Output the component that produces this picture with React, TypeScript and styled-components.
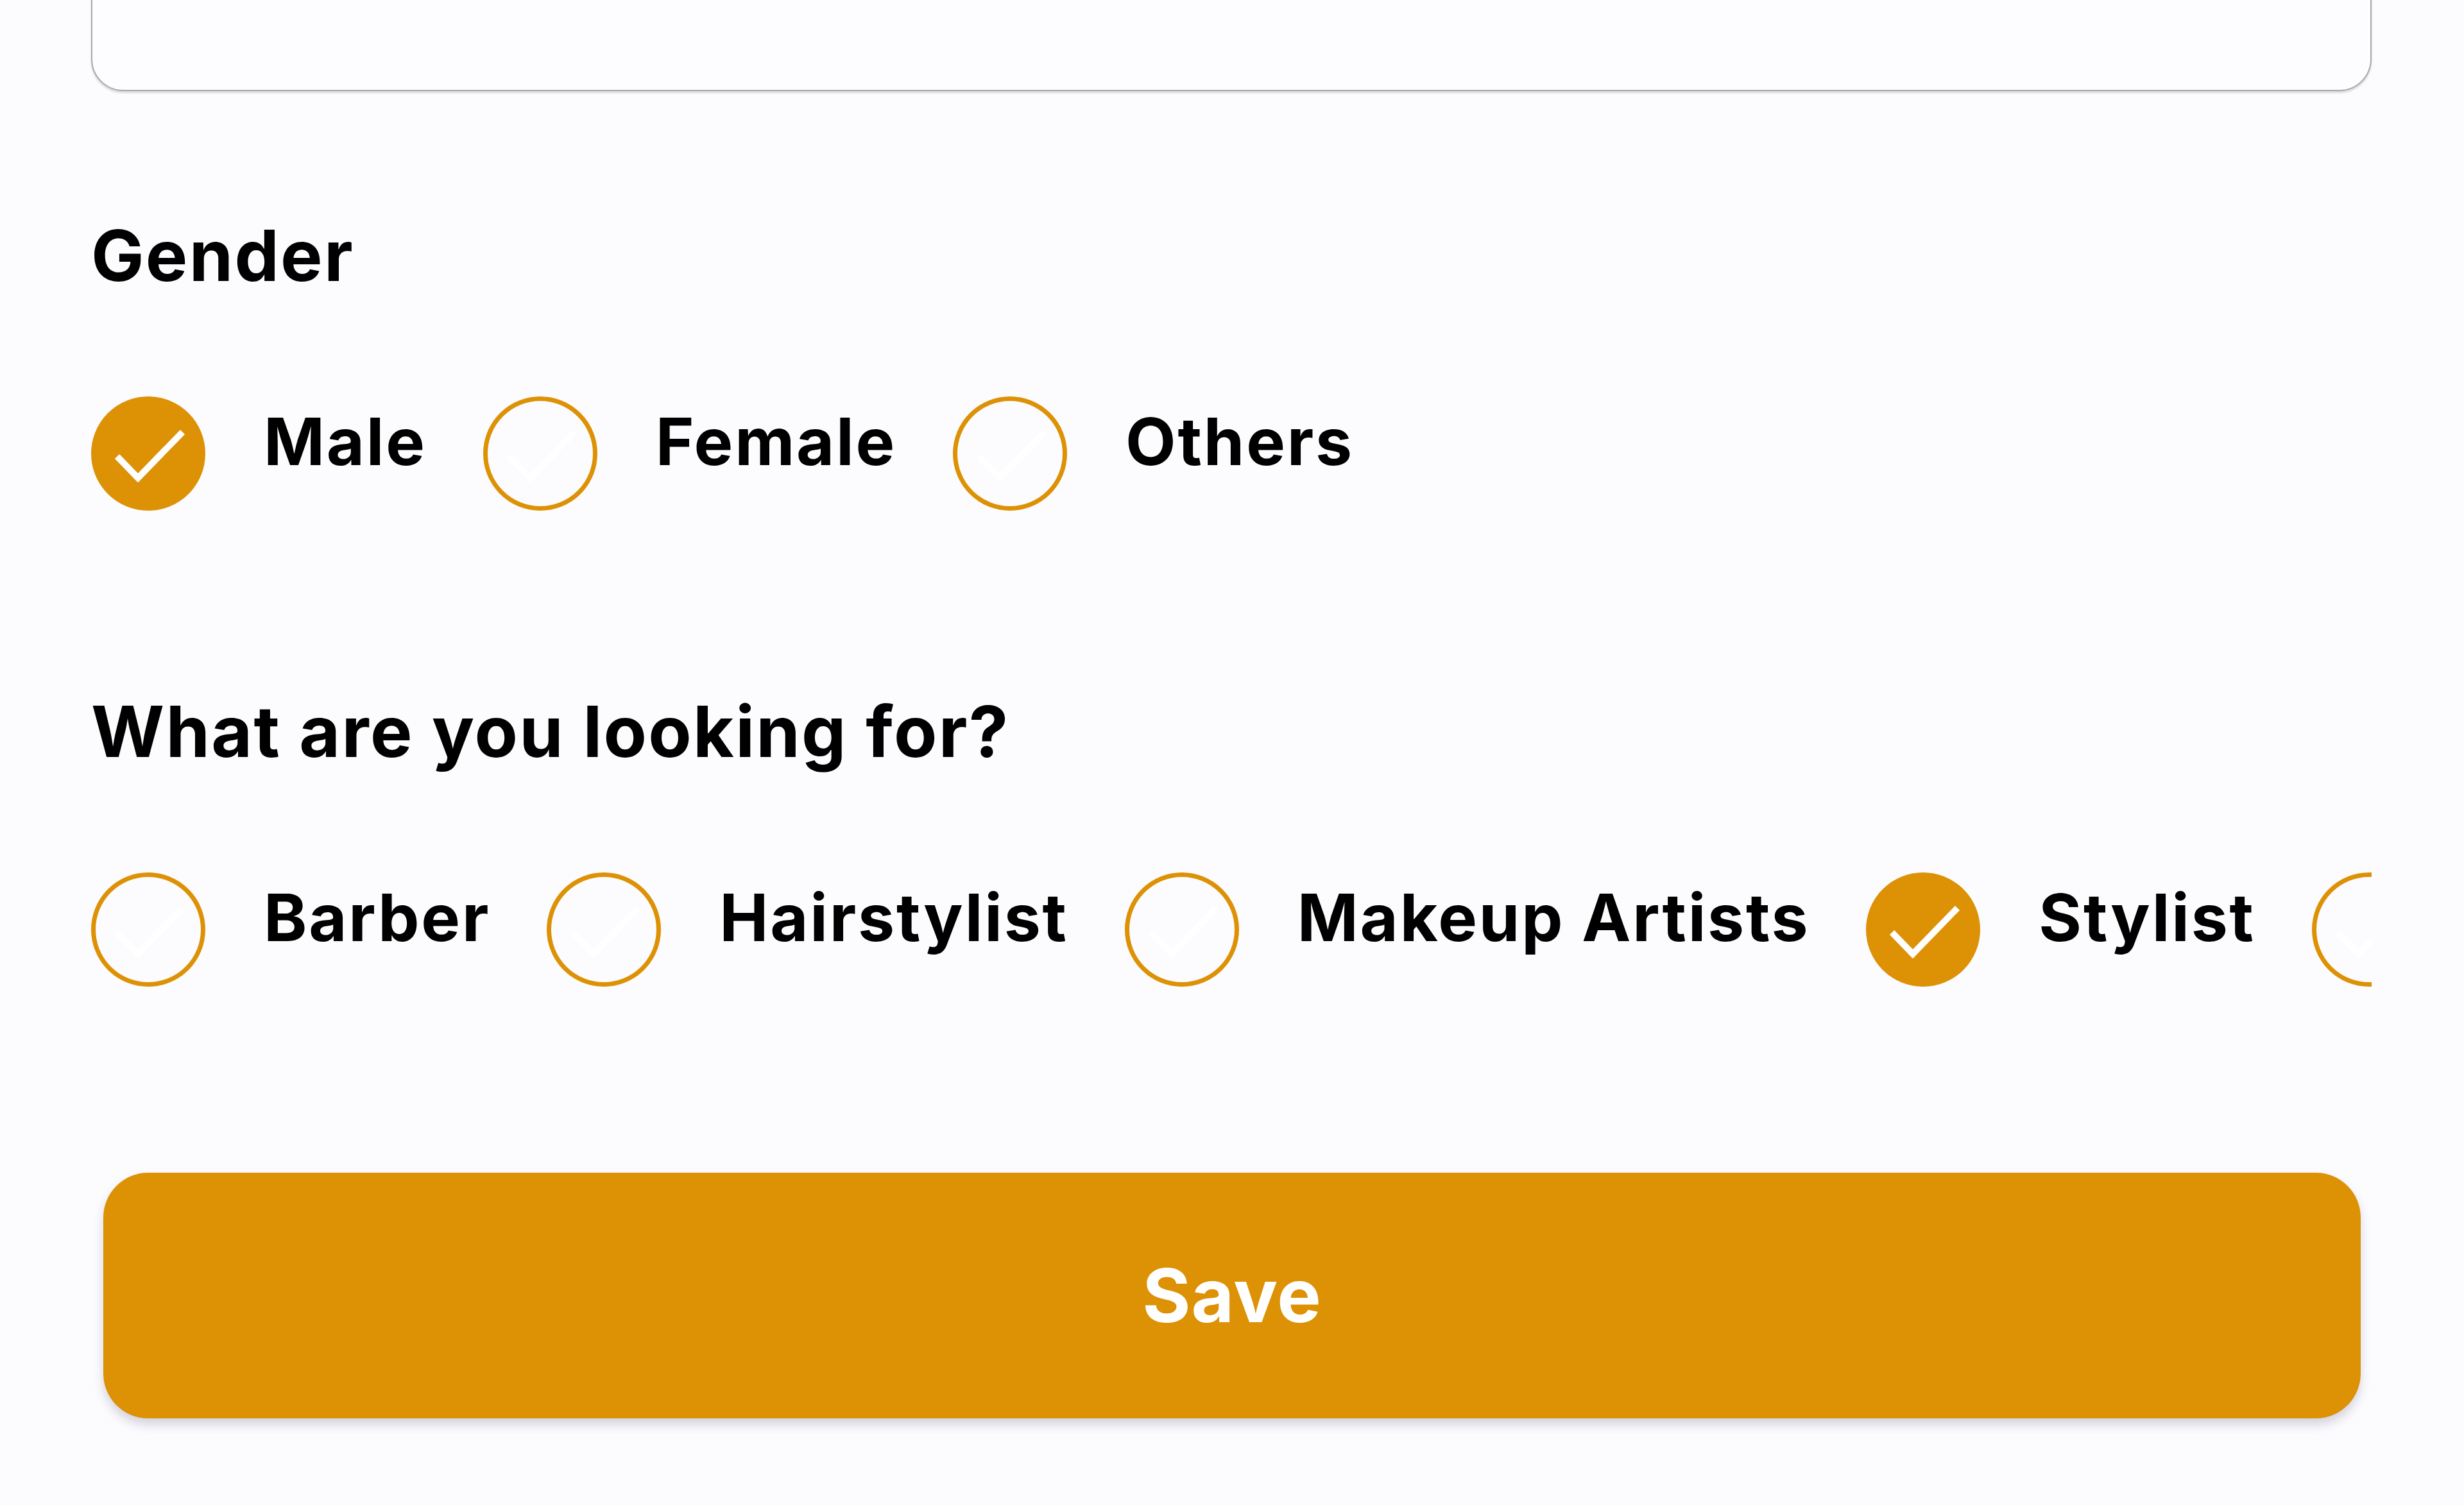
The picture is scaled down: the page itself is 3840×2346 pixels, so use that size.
import React from "react";
import styled, { createGlobalStyle } from "styled-components";

const ORANGE = "#DD9105";

const GlobalStyle = createGlobalStyle`
  html, body {
    margin: 0;
    padding: 0;
    background: #FCFBFE;
  }
  body {
    font-family: Inter, "Noto Sans", "Liberation Sans", sans-serif;
    color: #000;
  }
  * { box-sizing: border-box; }
`;

const Page = styled.div`
  height: 2346px;
  overflow: hidden;
  padding: 0 144px 0 142px;
  display: flex;
  flex-direction: column;
`;

const InputBox = styled.div`
  flex-shrink: 0;
  height: 300px;
  margin-top: -158px;
  border: 2px solid #a9a9a9;
  border-radius: 50px;
  background: #fdfcfe;
  box-shadow: 0 3px 3px rgba(0, 0, 0, 0.14);
`;

const SectionTitle = styled.h2<{ $top: number }>`
  margin: ${(p) => p.$top}px 0 0;
  font-size: 110px;
  line-height: 132px;
  font-weight: 700;
  letter-spacing: 2.3px;
  white-space: nowrap;
`;

const OptionRow = styled.div`
  display: flex;
  gap: 88px;
  margin-top: 154px;
  overflow: hidden;
  flex-shrink: 0;
`;

const Option = styled.label`
  display: flex;
  align-items: flex-start;
  gap: 91px;
  flex-shrink: 0;
  cursor: pointer;
`;

const Radio = styled.span<{ $checked: boolean }>`
  width: 178px;
  height: 178px;
  flex-shrink: 0;
  border-radius: 50%;
  border: 7px solid ${ORANGE};
  background: ${(p) => (p.$checked ? ORANGE : "transparent")};
  display: flex;
  align-items: center;
  justify-content: center;
  svg {
    display: block;
  }
`;

const OptionText = styled.span`
  padding-top: 10px;
  font-size: 102px;
  line-height: 120px;
  font-weight: 700;
  letter-spacing: 2.8px;
  white-space: nowrap;
`;

const SaveButton = styled.button`
  flex-shrink: 0;
  margin: 290px 17px 0 19px;
  height: 383px;
  border: none;
  border-radius: 70px;
  background: ${ORANGE};
  color: #fff;
  font-family: Inter, "Noto Sans", "Liberation Sans", sans-serif;
  font-size: 115px;
  font-weight: 700;
  letter-spacing: 1px;
  display: flex;
  align-items: center;
  justify-content: center;
  box-shadow: 0 10px 16px rgba(40, 40, 80, 0.18);
  cursor: pointer;
`;

const Check = () => (
  <svg width="164" height="164" viewBox="7 7 164 164" fill="none">
    <polyline
      points="44,97 73,127 139,59"
      stroke="#ffffff"
      strokeWidth="10"
      strokeLinecap="square"
      strokeLinejoin="miter"
      fill="none"
    />
  </svg>
);

type Item = { label: string; checked: boolean };

const RadioGroup = ({ items }: { items: Item[] }) => (
  <OptionRow>
    {items.map((it) => (
      <Option key={it.label}>
        <Radio $checked={it.checked}>
          <Check />
        </Radio>
        <OptionText>{it.label}</OptionText>
      </Option>
    ))}
  </OptionRow>
);

const gender: Item[] = [
  { label: "Male", checked: true },
  { label: "Female", checked: false },
  { label: "Others", checked: false },
];

const looking: Item[] = [
  { label: "Barber", checked: false },
  { label: "Hairstylist", checked: false },
  { label: "Makeup Artists", checked: false },
  { label: "Stylist", checked: true },
  { label: "Nail Artist", checked: false },
];

export default function App() {
  return (
    <>
      <GlobalStyle />
      <Page>
        <InputBox />
        <SectionTitle $top={190}>Gender</SectionTitle>
        <RadioGroup items={gender} />
        <SectionTitle $top={278}>What are you looking for?</SectionTitle>
        <RadioGroup items={looking} />
        <SaveButton>Save</SaveButton>
      </Page>
    </>
  );
}
